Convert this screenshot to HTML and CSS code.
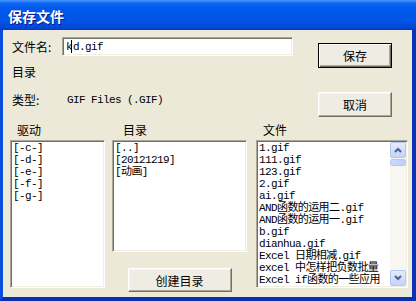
FILE: index.html
```html
<!DOCTYPE html>
<html lang="zh-CN">
<head>
  <meta charset="UTF-8" />
  <title>保存文件</title>
  <link rel="stylesheet" href="styles.css">
</head>
<body>
  <div class="window">
    <div class="titlebar">保存文件</div>

    <div class="frame">
      <div class="top">
        <div class="fields">
          <div class="name-row">
            <label for="filename">文件名:</label>
            <div class="textbox" id="filename">k<span class="caret"></span>d.gif</div>
          </div>
          <div class="dir-row">目录</div>
          <div class="type-row">
            <span class="type-label">类型:</span>
            <span class="type-value">GIF Files (.GIF)</span>
          </div>
        </div>

        <div class="actions">
          <button class="btn btn-default">保存</button>
          <button class="btn btn-cancel">取消</button>
        </div>
      </div>

      <div class="lists">
        <div class="col col-drives">
          <div class="col-label">驱动</div>
          <div class="listbox listbox-drives">
            <div class="item">[-c-]</div>
            <div class="item">[-d-]</div>
            <div class="item">[-e-]</div>
            <div class="item">[-f-]</div>
            <div class="item">[-g-]</div>
          </div>
        </div>

        <div class="col col-dirs">
          <div class="col-label">目录</div>
          <div class="listbox listbox-dirs">
            <div class="item">[..]</div>
            <div class="item">[20121219]</div>
            <div class="item">[动画]</div>
          </div>
          <button class="btn btn-mkdir">创建目录</button>
        </div>

        <div class="col col-files">
          <div class="col-label">文件</div>
          <div class="listbox listbox-files">
            <div class="items">
              <div class="item">1.gif</div>
              <div class="item">111.gif</div>
              <div class="item">123.gif</div>
              <div class="item">2.gif</div>
              <div class="item">ai.gif</div>
              <div class="item">AND函数的运用二.gif</div>
              <div class="item">AND函数的运用一.gif</div>
              <div class="item">b.gif</div>
              <div class="item">dianhua.gif</div>
              <div class="item">Excel 日期相减.gif</div>
              <div class="item">excel 中怎样把负数批量</div>
              <div class="item">Excel if函数的一些应用</div>
            </div>
            <div class="scrollbar">
              <div class="scroll-btn">
                <svg width="8" height="6" viewBox="0 0 8 6"><path d="M1 5 L4 2 L7 5" fill="none" stroke="#4d6185" stroke-width="2"/></svg>
              </div>
              <div class="scroll-thumb"></div>
              <div class="scroll-track"></div>
              <div class="scroll-btn">
                <svg width="8" height="6" viewBox="0 0 8 6"><path d="M1 1 L4 4 L7 1" fill="none" stroke="#4d6185" stroke-width="2"/></svg>
              </div>
            </div>
          </div>
        </div>
      </div>
    </div>
  </div>
</body>
</html>
```

FILE: styles.css
```css
html,
body {
  margin: 0;
}

body {
  font-family: "Noto Sans CJK SC", "Liberation Sans", sans-serif;
  font-size: 12px;
  color: #000;
  background: #ece9d8;
}

.window {
  width: 416px;
  height: 301px;
  display: flex;
  flex-direction: column;
}

.titlebar {
  height: 30px;
  box-sizing: border-box;
  padding: 1px 0 0 8px;
  display: flex;
  align-items: center;
  font-size: 14px;
  font-weight: bold;
  color: #fff;
  text-shadow: 1px 1px #0a1883;
  background: linear-gradient(#4a9aff 0, #0f68f2 3px, #0058ee 9px, #0055e6 20px, #0049d9 27px, #003cc4 30px);
}

.frame {
  flex: 1;
  display: flex;
  flex-direction: column;
  padding-top: 7px;
  background: #ece9d8;
  border-style: solid;
  border-width: 0 4px 4px 3px;
  border-color: #0846d8 #0733b8 #0731b0 #0a4ede;
}

/* top area: name, directory, type */

.top {
  display: flex;
  height: 85px;
}

.fields {
  padding-left: 9px;
}

.name-row {
  display: flex;
  align-items: center;
  height: 19px;
}

.name-row label {
  width: 50px;
}

.textbox {
  width: 231px;
  height: 19px;
  box-sizing: border-box;
  padding: 1px 3px;
  display: flex;
  align-items: center;
  background: #fff;
  border: 1px solid;
  border-color: #aca899 #fff #fff #aca899;
  box-shadow: inset 1px 1px #716f64, inset -1px -1px #f1efe2;
  font-family: "Liberation Mono", monospace;
  font-size: 11px;
  letter-spacing: -0.6px;
}

.caret {
  display: inline-block;
  width: 1px;
  height: 13px;
  margin: 0 1px 0 -1px;
  background: #000;
}

.dir-row {
  margin-top: 9px;
  line-height: 14px;
}

.type-row {
  margin-top: 14px;
  line-height: 14px;
  display: flex;
}

.type-label {
  width: 55px;
}

.type-value {
  font-family: "Liberation Mono", monospace;
  font-size: 11px;
  letter-spacing: -0.6px;
}

.actions {
  margin-left: auto;
  padding: 6px 20px 0 0;
  display: flex;
  flex-direction: column;
  gap: 24px;
}

/* classic raised buttons */

.btn {
  width: 74px;
  height: 25px;
  padding: 0;
  font-family: inherit;
  font-size: 12px;
  color: #000;
  background: #efede3;
  border: 1px solid;
  border-color: #fff #716f64 #716f64 #fff;
  box-shadow: inset -1px -1px #aca899, inset 1px 1px #f6f5ee;
  cursor: pointer;
}

.btn-default {
  border: 1px solid #000;
  box-shadow: inset 1px 1px #fff, inset -1px -1px #716f64, inset -2px -2px #aca899;
}

.btn-mkdir {
  display: block;
  width: 104px;
  height: 24px;
  margin: 16px auto 0;
}

/* lists */

.lists {
  display: flex;
  padding-left: 7px;
}

.col-label {
  line-height: 16px;
  margin-bottom: 2px;
}

.col-drives {
  width: 95px;
}

.col-drives .col-label {
  padding-left: 7px;
}

.col-dirs {
  width: 135px;
  margin-left: 7px;
}

.col-dirs .col-label {
  padding-left: 11px;
}

.col-files {
  width: 152px;
  margin-left: 9px;
}

.col-files .col-label {
  padding-left: 7px;
}

.listbox {
  box-sizing: border-box;
  background: #fff;
  border: 1px solid;
  border-color: #aca899 #fff #fff #aca899;
  box-shadow: inset 1px 1px #716f64, inset -1px -1px #f1efe2;
  padding: 1px 2px;
  overflow: hidden;
}

.listbox-drives,
.listbox-files {
  height: 148px;
}

.listbox-dirs {
  height: 112px;
}

.item {
  font-family: "Liberation Mono", "Noto Sans CJK SC", monospace;
  font-size: 11px;
  line-height: 12px;
  letter-spacing: -0.6px;
  white-space: nowrap;
}

.listbox-files {
  display: flex;
  padding: 1px 1px 1px 2px;
}

.items {
  flex: 1;
  overflow: hidden;
}

.scrollbar {
  width: 16px;
  display: flex;
  flex-direction: column;
  background: #f7f6f1;
}

.scroll-btn {
  height: 16px;
  box-sizing: border-box;
  display: flex;
  align-items: center;
  justify-content: center;
  background: linear-gradient(#e3ebfd, #c2d3fc);
  border: 1px solid #b4c8f6;
  border-radius: 2px;
}

.scroll-thumb {
  height: 7px;
  margin-top: 1px;
  box-sizing: border-box;
  background: linear-gradient(90deg, #cad8fb, #bcd0fa);
  border: 1px solid #b4c8f6;
  border-radius: 2px;
}

.scroll-track {
  flex: 1;
}
```
